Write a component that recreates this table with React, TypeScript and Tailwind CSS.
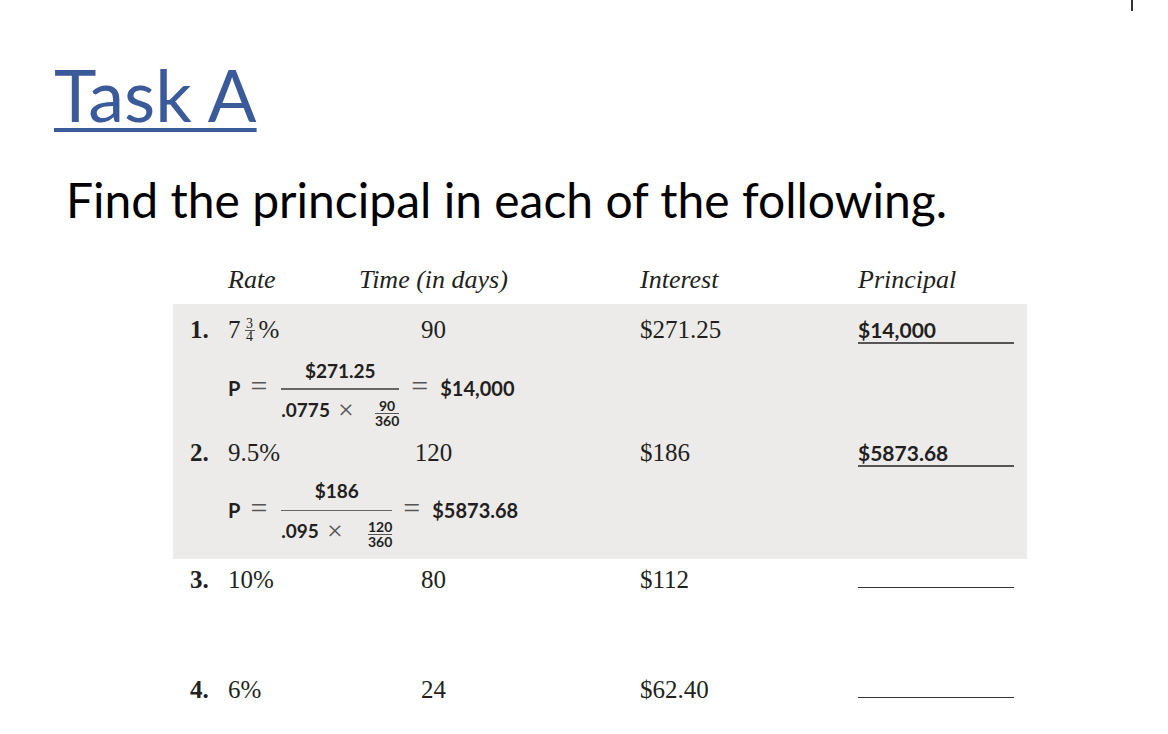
const serif = "font-['Liberation_Serif','Times_New_Roman',serif]";
const sans = "font-['Lato','Liberation_Sans',sans-serif]";

const cols = "grid grid-cols-[38px_130px_151px_131px_218px_156px] items-baseline";

const SmallFrac = ({ top, bottom }: { top: string; bottom: string }) => (
  <span className="inline-flex flex-col items-center text-[14px] leading-[12px] font-bold">
    <span>{top}</span>
    <span className="my-px h-px w-full bg-[#555]" />
    <span>{bottom}</span>
  </span>
);

const Formula = ({
  num,
  den,
  small,
  result,
  width,
  numGap,
  eqGap,
  textTop,
  eqTop,
}: {
  num: string;
  den: string;
  small: [string, string];
  result: string;
  width: string;
  numGap: string;
  eqGap: string;
  textTop: string;
  eqTop: string;
}) => (
  <div className={`flex items-start pl-[55px] ${sans} font-bold`}>
    <span className={`text-[20px] leading-[22px] ${textTop}`}>P</span>
    <span className={`ml-[10px] ${eqTop} ${serif} font-normal text-[30px] leading-none text-[#555]`}>=</span>
    <div className={`ml-[14px] flex flex-col items-center text-[19px] ${width}`}>
      <span className={`leading-[22px] ${numGap}`}>{num}</span>
      <span className="mb-[3px] h-[1.5px] w-full bg-[#666]" />
      <span className="flex w-full items-center leading-[22px]">
        <span>{den}</span>
        <span className={`ml-[8px] ${serif} font-normal text-[28px] leading-none text-[#555]`}>×</span>
        <span className="ml-auto">
          <SmallFrac top={small[0]} bottom={small[1]} />
        </span>
      </span>
    </div>
    <span className={`${eqGap} ${eqTop} ${serif} font-normal text-[30px] leading-none text-[#555]`}>=</span>
    <span className={`ml-[12px] text-[20px] leading-[22px] ${textTop}`}>{result}</span>
  </div>
);

const Row = ({
  n,
  rate,
  time,
  interest,
  principal,
}: {
  n: string;
  rate: React.ReactNode;
  time: string;
  interest: string;
  principal?: string;
}) => (
  <div className={`${cols} ${serif} text-[25px] leading-[30px]`}>
    <span className="font-bold">{n}</span>
    <span>{rate}</span>
    <span className="text-center">{time}</span>
    <span />
    <span>{interest}</span>
    {principal ? (
      <span className={`block border-b-2 border-[#555] pb-[1px] ${sans} font-bold text-[21px] leading-[22px]`}>
        {principal}
      </span>
    ) : (
      <span className="block h-[20px] border-b-[1.5px] border-[#333]" />
    )}
  </div>
);

export default function App() {
  return (
    <div className="relative min-h-[734px] w-[1168px] bg-white text-[#231f20]">
      <div className="absolute left-[1131px] top-0 h-[11px] w-[2px] bg-[#333]" />

      <div className="pl-[54px] pt-[50px]">
        <h1
          className={`${sans} text-[72px] leading-[88px] text-[#3b5a9a] underline decoration-[4px] underline-offset-[6px]`}
        >
          Task A
        </h1>
      </div>

      <p className={`mt-[32px] pl-[66px] ${sans} text-[48px] leading-[60px] text-black`}>
        Find the principal in each of the following.
      </p>

      <div className="ml-[173px] mt-[33px] w-[854px]">
        <div className={`${cols} pl-[17px] ${serif} italic text-[26px] leading-[34px]`}>
          <span />
          <span>Rate</span>
          <span className="text-center">Time (in days)</span>
          <span />
          <span>Interest</span>
          <span>Principal</span>
        </div>

        <div className="mt-[7px] bg-[#edebea] pl-[17px] pt-[11px] pb-[11px]">
          <Row
            n="1."
            rate={
              <span className="inline-flex items-center">
                7
                <span className="mx-[4px] inline-flex flex-col items-center text-[14px] leading-[12px]">
                  <span>3</span>
                  <span className="h-px w-[10px] bg-[#555]" />
                  <span>4</span>
                </span>
                %
              </span>
            }
            time="90"
            interest="$271.25"
            principal="$14,000"
          />
          <div className="mt-[15px] -ml-[17px]">
            <Formula
              num="$271.25"
              den=".0775"
              small={["90", "360"]}
              result="$14,000"
              width="w-[118px]"
              numGap="mb-[6px]"
              eqGap="ml-[12px]"
              textTop="mt-[17px]"
              eqTop="mt-[11px]"
            />
          </div>
          <div className="mt-[11px]">
            <Row n="2." rate="9.5%" time="120" interest="$186" principal="$5873.68" />
          </div>
          <div className="mt-[12px] -ml-[17px]">
            <Formula
              num="$186"
              den=".095"
              small={["120", "360"]}
              result="$5873.68"
              width="w-[111px]"
              numGap="mb-[8px]"
              eqGap="ml-[11px]"
              textTop="mt-[19px]"
              eqTop="mt-[13px]"
            />
          </div>
        </div>

        <div className="pl-[17px] pt-[6px]">
          <Row n="3." rate="10%" time="80" interest="$112" />
          <div className="mt-[80px]">
            <Row n="4." rate="6%" time="24" interest="$62.40" />
          </div>
        </div>
      </div>
    </div>
  );
}
